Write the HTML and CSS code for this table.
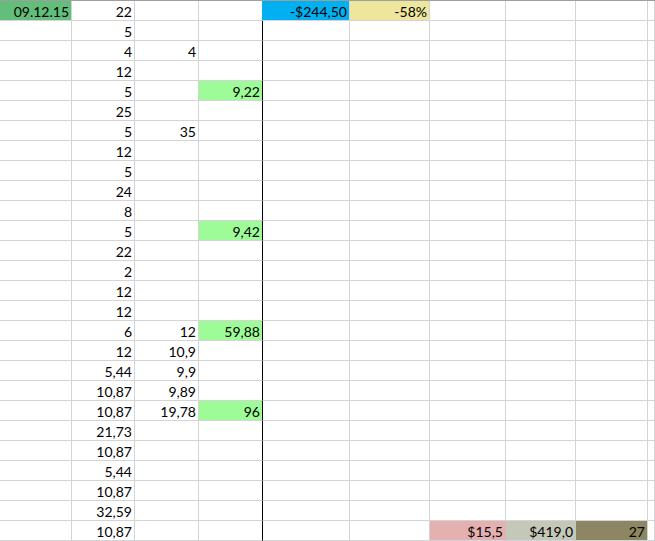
FILE: index.html
```html
<!DOCTYPE html>
<html>
<head>
<meta charset="utf-8">
<link rel="stylesheet" href="styles.css">
</head>
<body>
<div class="sheet">
  <div class="row"><div class="green">09.12.15</div><div>22</div><div></div><div class="under-blue"></div><div class="blue">-$244,50</div><div class="yellow">-58%</div><div></div><div></div><div></div><div></div></div>
  <div class="row"><div></div><div>5</div><div></div><div></div><div></div><div></div><div></div><div></div><div></div><div></div></div>
  <div class="row"><div></div><div>4</div><div>4</div><div></div><div></div><div></div><div></div><div></div><div></div><div></div></div>
  <div class="row"><div></div><div>12</div><div></div><div></div><div></div><div></div><div></div><div></div><div></div><div></div></div>
  <div class="row"><div></div><div>5</div><div></div><div class="lime">9,22</div><div></div><div></div><div></div><div></div><div></div><div></div></div>
  <div class="row"><div></div><div>25</div><div></div><div></div><div></div><div></div><div></div><div></div><div></div><div></div></div>
  <div class="row"><div></div><div>5</div><div>35</div><div></div><div></div><div></div><div></div><div></div><div></div><div></div></div>
  <div class="row"><div></div><div>12</div><div></div><div></div><div></div><div></div><div></div><div></div><div></div><div></div></div>
  <div class="row"><div></div><div>5</div><div></div><div></div><div></div><div></div><div></div><div></div><div></div><div></div></div>
  <div class="row"><div></div><div>24</div><div></div><div></div><div></div><div></div><div></div><div></div><div></div><div></div></div>
  <div class="row"><div></div><div>8</div><div></div><div></div><div></div><div></div><div></div><div></div><div></div><div></div></div>
  <div class="row"><div></div><div>5</div><div></div><div class="lime">9,42</div><div></div><div></div><div></div><div></div><div></div><div></div></div>
  <div class="row"><div></div><div>22</div><div></div><div></div><div></div><div></div><div></div><div></div><div></div><div></div></div>
  <div class="row"><div></div><div>2</div><div></div><div></div><div></div><div></div><div></div><div></div><div></div><div></div></div>
  <div class="row"><div></div><div>12</div><div></div><div></div><div></div><div></div><div></div><div></div><div></div><div></div></div>
  <div class="row"><div></div><div>12</div><div></div><div></div><div></div><div></div><div></div><div></div><div></div><div></div></div>
  <div class="row"><div></div><div>6</div><div>12</div><div class="lime">59,88</div><div></div><div></div><div></div><div></div><div></div><div></div></div>
  <div class="row"><div></div><div>12</div><div>10,9</div><div></div><div></div><div></div><div></div><div></div><div></div><div></div></div>
  <div class="row"><div></div><div>5,44</div><div>9,9</div><div></div><div></div><div></div><div></div><div></div><div></div><div></div></div>
  <div class="row"><div></div><div>10,87</div><div>9,89</div><div></div><div></div><div></div><div></div><div></div><div></div><div></div></div>
  <div class="row"><div></div><div>10,87</div><div>19,78</div><div class="lime">96</div><div></div><div></div><div></div><div></div><div></div><div></div></div>
  <div class="row"><div></div><div>21,73</div><div></div><div></div><div></div><div></div><div></div><div></div><div></div><div></div></div>
  <div class="row"><div></div><div>10,87</div><div></div><div></div><div></div><div></div><div></div><div></div><div></div><div></div></div>
  <div class="row"><div></div><div>5,44</div><div></div><div></div><div></div><div></div><div></div><div></div><div></div><div></div></div>
  <div class="row"><div></div><div>10,87</div><div></div><div></div><div></div><div></div><div></div><div></div><div></div><div></div></div>
  <div class="row"><div></div><div>32,59</div><div></div><div></div><div></div><div></div><div></div><div></div><div></div><div></div></div>
  <div class="row"><div></div><div>10,87</div><div></div><div></div><div></div><div></div><div class="pink">$15,5</div><div class="sage">$419,0</div><div class="olive">27</div><div></div></div>
</div>
</body>
</html>
```
FILE: styles.css
```css
html, body {
  margin: 0;
  padding: 0;
  background: #ffffff;
}
.sheet {
  width: 655px;
  border-top: 1px solid #9e9e9e;
  font-family: Lato, "Liberation Sans", sans-serif;
  font-size: 14px;
  color: #000000;
}
.row {
  display: grid;
  grid-template-columns: 72px 63px 64px 64px 87px 80px 76px 70px 72px 1fr;
}
.row > div {
  box-sizing: border-box;
  height: 20px;
  line-height: 19px;
  padding: 1px 2px 0 0;
  text-align: right;
  white-space: nowrap;
  overflow: hidden;
  border-right: 1px solid #d4d4d4;
  border-bottom: 1px solid #d4d4d4;
}
.row > div:nth-child(4) {
  border-right-color: #000000;
}
.row > div.under-blue {
  border-right-color: #00b0f0;
}
.green { background: #63be7b; }
.blue { background: #00b0f0; }
.yellow { background: #eee69c; }
.lime { background: #9dfc98; }
.pink { background: #e4b1b0; border-right-color: #e4b1b0 !important; }
.sage { background: #c4c8b8; border-right-color: #c4c8b8 !important; }
.olive { background: #8c8662; }
```
